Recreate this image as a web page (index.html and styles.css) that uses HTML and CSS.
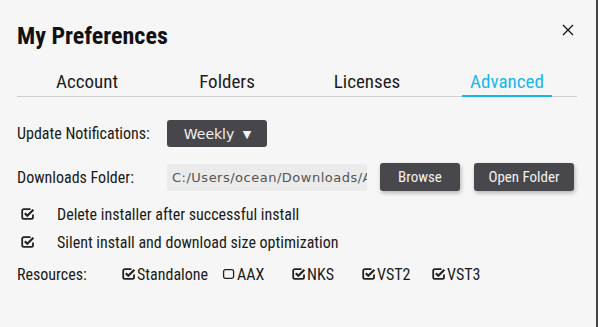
FILE: index.html
```
<!DOCTYPE html>
<html lang="en">
<head>
<meta charset="utf-8">
<title>My Preferences</title>
<link rel="stylesheet" href="styles.css">
</head>
<body>
<div class="dialog">
  <header class="head">
    <h1 class="title">My Preferences</h1>
    <button class="close" aria-label="Close">
      <svg width="12" height="12" viewBox="0 0 12 12"><path d="M1 1L11 11M11 1L1 11" stroke="#111" stroke-width="1.3" fill="none"/></svg>
    </button>
  </header>
  <nav class="tabs">
    <div class="tab"><span class="tab-label">Account</span></div>
    <div class="tab"><span class="tab-label">Folders</span></div>
    <div class="tab"><span class="tab-label">Licenses</span></div>
    <div class="tab active"><span class="tab-label">Advanced</span></div>
  </nav>
  <section class="panel">
    <div class="row row-update">
      <span class="label">Update Notifications:</span>
      <button class="select">Weekly <span class="caret">&#9660;</span></button>
    </div>
    <div class="row row-folder">
      <span class="label">Downloads Folder:</span>
      <div class="path"><span class="path-text">C:/Users/ocean/Downloads/Arturia</span></div>
      <button class="btn btn-browse">Browse</button>
      <button class="btn btn-open">Open Folder</button>
    </div>
    <div class="check-row first">
      <svg class="cb" width="14" height="12" viewBox="0 0 14 12"><path d="M9.5 1.2H2.8A1.6 1.6 0 0 0 1.2 2.8v6.4A1.6 1.6 0 0 0 2.8 10.8h7.6a1.6 1.6 0 0 0 1.6-1.6V6.6" fill="none" stroke="#222" stroke-width="1.8"/><path d="M3.8 5.2l2.5 2.5L12.4 1.8" fill="none" stroke="#222" stroke-width="2.2"/></svg>
      <span class="check-text">Delete installer after successful install</span>
    </div>
    <div class="check-row">
      <svg class="cb" width="14" height="12" viewBox="0 0 14 12"><path d="M9.5 1.2H2.8A1.6 1.6 0 0 0 1.2 2.8v6.4A1.6 1.6 0 0 0 2.8 10.8h7.6a1.6 1.6 0 0 0 1.6-1.6V6.6" fill="none" stroke="#222" stroke-width="1.8"/><path d="M3.8 5.2l2.5 2.5L12.4 1.8" fill="none" stroke="#222" stroke-width="2.2"/></svg>
      <span class="check-text">Silent install and download size optimization</span>
    </div>
    <div class="row row-res">
      <span class="label label-res">Resources:</span>
      <div class="res-list">
        <span class="res"><svg class="cb-s" width="14" height="12" viewBox="0 0 14 12"><path d="M9.5 1.2H2.8A1.6 1.6 0 0 0 1.2 2.8v6.4A1.6 1.6 0 0 0 2.8 10.8h7.6a1.6 1.6 0 0 0 1.6-1.6V6.6" fill="none" stroke="#222" stroke-width="1.8"/><path d="M3.8 5.2l2.5 2.5L12.4 1.8" fill="none" stroke="#222" stroke-width="2.2"/></svg>Standalone</span>
        <span class="res"><svg class="cb-s" width="14" height="12" viewBox="0 0 14 12"><rect x="1.6" y="1.6" width="10" height="8.8" rx="1.8" fill="none" stroke="#222" stroke-width="1.3"/></svg>AAX</span>
        <span class="res"><svg class="cb-s" width="14" height="12" viewBox="0 0 14 12"><path d="M9.5 1.2H2.8A1.6 1.6 0 0 0 1.2 2.8v6.4A1.6 1.6 0 0 0 2.8 10.8h7.6a1.6 1.6 0 0 0 1.6-1.6V6.6" fill="none" stroke="#222" stroke-width="1.8"/><path d="M3.8 5.2l2.5 2.5L12.4 1.8" fill="none" stroke="#222" stroke-width="2.2"/></svg>NKS</span>
        <span class="res"><svg class="cb-s" width="14" height="12" viewBox="0 0 14 12"><path d="M9.5 1.2H2.8A1.6 1.6 0 0 0 1.2 2.8v6.4A1.6 1.6 0 0 0 2.8 10.8h7.6a1.6 1.6 0 0 0 1.6-1.6V6.6" fill="none" stroke="#222" stroke-width="1.8"/><path d="M3.8 5.2l2.5 2.5L12.4 1.8" fill="none" stroke="#222" stroke-width="2.2"/></svg>VST2</span>
        <span class="res"><svg class="cb-s" width="14" height="12" viewBox="0 0 14 12"><path d="M9.5 1.2H2.8A1.6 1.6 0 0 0 1.2 2.8v6.4A1.6 1.6 0 0 0 2.8 10.8h7.6a1.6 1.6 0 0 0 1.6-1.6V6.6" fill="none" stroke="#222" stroke-width="1.8"/><path d="M3.8 5.2l2.5 2.5L12.4 1.8" fill="none" stroke="#222" stroke-width="2.2"/></svg>VST3</span>
      </div>
    </div>
  </section>
</div>
</body>
</html>
```
FILE: styles.css
```
* { box-sizing: border-box; }
html, body { margin: 0; padding: 0; }
body {
  background: #f6f6f6;
  font-family: "Roboto Condensed", "Liberation Sans Narrow", Roboto, sans-serif;
  color: #1a1a1a;
}
.dialog {
  width: 598px;
  height: 327px;
  padding: 0 19px 0 17px;
  border-right: 2px solid #454545;
}
.head {
  display: flex;
  justify-content: space-between;
  align-items: flex-start;
  padding-top: 21px;
}
.title {
  margin: 0;
  font-size: 24px;
  line-height: 30px;
  font-weight: 700;
  color: #111;
}
.close {
  border: 0;
  background: none;
  padding: 0;
  margin: 2px 2px 0 0;
  width: 14px;
  height: 14px;
  display: flex;
  align-items: center;
  justify-content: center;
}
.tabs {
  display: flex;
  margin-top: 19px;
  border-bottom: 1px solid #cfcfcf;
}
.tab {
  flex: 1;
  display: flex;
  justify-content: center;
}
.tab-label {
  font-size: 19px;
  line-height: 24px;
  padding: 0 8px 1px;
  margin-bottom: -1px;
  border-bottom: 2px solid transparent;
  color: #1c1c1c;
}
.tab.active .tab-label {
  color: #17b7ef;
  border-bottom-color: #14b6ef;
}
.panel { display: flex; flex-direction: column; }
.row { display: flex; align-items: center; }
.label {
  width: 150px;
  flex: none;
  font-size: 16px;
  color: #1a1a1a;
}
.row-update { margin-top: 23px; height: 27px; }
.select {
  width: 100px;
  height: 27px;
  border: 0;
  border-radius: 3px;
  background: #47464b;
  color: #f2f2f2;
  font-family: "DejaVu Sans", sans-serif;
  font-size: 14px;
  padding: 0 0 0 1px;
}
.caret { font-size: 11px; margin-left: 4px; position: relative; top: -1px; }
.row-folder { margin-top: 16px; height: 28px; }
.path {
  width: 200px;
  flex: none;
  height: 27px;
  line-height: 27px;
  background: #ebebeb;
  border-radius: 2px;
  padding-left: 5px;
  font-family: "DejaVu Sans", sans-serif;
  font-size: 13px;
  letter-spacing: 0.5px;
  color: #555;
  white-space: nowrap;
  overflow: hidden;
}
.path-text { display: block; width: 195px; overflow: hidden; }
.btn {
  height: 28px;
  border: 0;
  border-radius: 3px;
  background: #48474c;
  color: #f2f2f2;
  font-family: inherit;
  font-size: 15px;
  box-shadow: 1px 2px 4px rgba(0, 0, 0, 0.28);
  padding: 0;
}
.btn-browse { width: 80px; margin-left: 13px; }
.btn-open { width: 100px; margin-left: 14px; }
.check-row {
  display: flex;
  align-items: center;
  height: 28px;
  padding-left: 4px;
}
.check-row.first { margin-top: 9px; }
.cb { flex: none; margin-right: 22px; }
.check-text { font-size: 16px; }
.row-res { margin-top: 4px; height: 28px; }
.label-res { width: 105px; }
.res-list { display: flex; gap: 14px; }
.res {
  display: flex;
  align-items: center;
  min-width: 56px;
  font-size: 16px;
}
.cb-s { flex: none; margin-right: 1px; }
```
